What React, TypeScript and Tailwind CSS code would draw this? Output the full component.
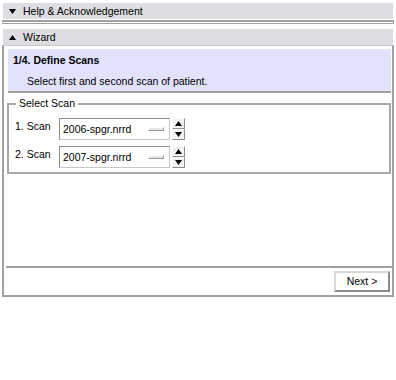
import React from 'react';

const font = { fontFamily: '"Liberation Sans", Arial, sans-serif' };

const Caret = ({ up }: { up?: boolean }) => (
  <svg width="7" height="5" viewBox="0 0 7 5" className="block">
    {up ? <polygon points="0,5 7,5 3.5,0" fill="#000" /> : <polygon points="0,0 7,0 3.5,5" fill="#000" />}
  </svg>
);

const ScanRow = ({ label, value }: { label: string; value: string }) => (
  <div className="flex items-center h-[22px]">
    <span className="w-[44px] text-[10.5px] leading-[13px] text-black -mt-[5px]">{label}</span>
    <div className="w-[111px] h-[22px] flex items-center justify-between bg-white border border-t-[#8c8c8c] border-l-[#8c8c8c] border-r-[#c8c8c8] border-b-[#c8c8c8] pl-[3px] pr-[5px]">
      <span className="text-[10.5px] leading-[13px] text-black mt-[1px]">{value}</span>
      <span className="w-[16px] h-[4px] bg-[#e8e8e8] border border-t-white border-l-white border-r-[#9a9a9a] border-b-[#9a9a9a]" />
    </div>
    {/* spinner */}
    <div className="ml-[2px] w-[13px] h-[22px] flex flex-col">
      <div className="h-[11px] flex items-center justify-center bg-[#f2f2f2] border border-t-white border-l-white border-r-[#8c8c8c] border-b-[#8c8c8c]">
        <Caret up />
      </div>
      <div className="h-[11px] flex items-center justify-center bg-[#f2f2f2] border border-t-white border-l-white border-r-[#8c8c8c] border-b-[#8c8c8c]">
        <Caret />
      </div>
    </div>
  </div>
);

export default function App() {
  return (
    <div className="w-[396px] h-[380px] bg-white pt-[3px] text-[10.5px] leading-[13px]" style={font}>
      {/* Help & Acknowledgement */}
      <div className="mx-[3px] h-[16px] bg-[#dddde2] flex items-center text-black pt-[1px]">
        <span className="ml-[6px] mr-[7px]"><Caret /></span>
        Help &amp; Acknowledgement
      </div>
      <div className="mx-[2px] mt-[1px] h-[4px] border-t-2 border-r border-b border-[#a0a0a0]" />

      {/* Wizard */}
      <div className="mx-[3px] mt-[5px] h-[16px] bg-[#dddde2] flex items-center text-black pt-[1px]">
        <span className="ml-[6px] mr-[7px]"><Caret up /></span>
        Wizard
      </div>

      <div className="mx-[2px] h-[252px] flex flex-col border-l-2 border-r-2 border-b-2 border-t border-t-[#c8c8c8] border-[#a0a0a0]">
        <div className="mt-[3px] ml-[4px] mr-[1px] h-[44px] bg-[#e2e2fc] border-b-2 border-[#a0a0a0] flex flex-col">
          <span className="ml-[5px] mt-[5px] font-bold text-black">1/4. Define Scans</span>
          <span className="ml-[19px] mt-[8px] text-black">Select first and second scan of patient.</span>
        </div>

        <fieldset className="mt-[4px] ml-[3px] mr-[1px] border-2 border-[#a8a8a8] px-[6px] pt-[8px] pb-[4px] flex flex-col gap-[6px]">
          <legend className="ml-[1px] px-[3px] text-black">Select Scan</legend>
          <ScanRow label="1. Scan" value="2006-spgr.nrrd" />
          <ScanRow label="2. Scan" value="2007-spgr.nrrd" />
        </fieldset>

        <div className="flex-1" />
        <div className="ml-[2px] h-[2px] bg-[#a0a0a0]" />
        <div className="h-[27px] flex items-center justify-end pr-[2px]">
          <button className="w-[56px] h-[21px] bg-white border-2 border-t-[#d8d8d8] border-l-[#d8d8d8] border-r-[#8c8c8c] border-b-[#8c8c8c] text-black">
            Next &gt;
          </button>
        </div>
      </div>
    </div>
  );
}
